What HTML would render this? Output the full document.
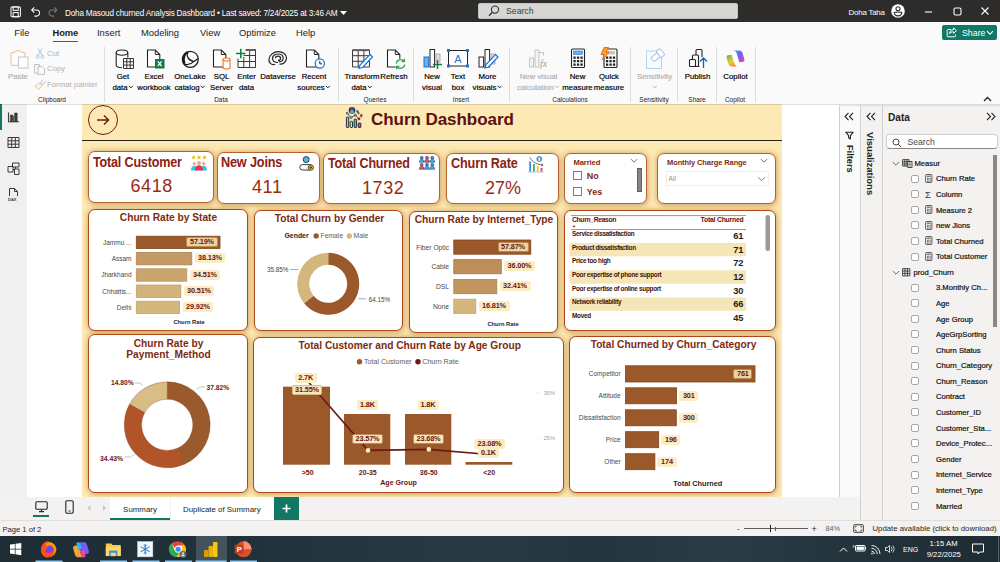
<!DOCTYPE html>
<html lang="en">
<head>
<meta charset="utf-8">
<title>Doha Masoud churned Analysis Dashboard</title>
<style>
*{box-sizing:border-box;margin:0;padding:0}
html,body{width:1000px;height:562px;overflow:hidden;background:#fff}
body{position:relative;font-family:"Liberation Sans",sans-serif;font-size:9px;color:#252423}
.abs{position:absolute}
.t{position:absolute;white-space:nowrap;line-height:1;margin-top:.8px}
.c{transform:translateX(-50%)}
.r{transform:translateX(-100%)}
#titlebar{left:0;top:0;width:1000px;height:22px;background:#2e2c2b}
#menurow{left:0;top:22px;width:1000px;height:21px;background:#fafafa}
#ribbon{left:0;top:43px;width:1000px;height:61px;background:#fafafa}
.menu{font-size:9.4px;color:#1b1a19;top:27px}
.rl{-webkit-text-stroke:.18px currentColor;font-size:9px;color:#000;text-align:center;line-height:10.6px;white-space:nowrap;position:absolute;transform:translateX(-50%);top:72px}
.rl.dis{color:#b3b0ad}
.gl{font-size:8px;color:#1b1a19;position:absolute;transform:translateX(-50%);top:96.5px;white-space:nowrap;line-height:1}
.sep{position:absolute;top:47px;width:1px;height:55px;background:#dcdcdc}
.ico{position:absolute;overflow:visible}
#leftnav{left:0;top:104px;width:27px;height:393px;background:#f0f0f0}
#canvas{left:82px;top:104px;width:700px;height:393px;background:#fde9b3}
.card{position:absolute;background:#fff;border:1.3px solid #b5622c;border-radius:7px;box-shadow:0 0 5px 1px rgba(205,155,90,.62), 1px 2px 4px rgba(175,125,60,.3)}
.ct{font-size:14.2px;font-weight:bold;color:#8b2211;letter-spacing:-.2px}
.cv{font-size:21px;color:#9b2a12;letter-spacing:.6px}
.pt{font-size:12px;font-weight:bold;color:#7d2a10;text-align:center}
.cat{font-size:8px;color:#4a4846}
.dl{position:absolute;font-size:8px;margin-top:-.3px;font-weight:bold;color:#6b1414;background:#fbecc4;border-radius:2px;height:10px;line-height:10px;text-align:center;white-space:nowrap}
.bar{position:absolute}
.tree{font-size:7.65px;color:#111;-webkit-text-stroke:.2px #111}
.tr{left:572px;font-size:6.4px;font-weight:bold;color:#3a1208;letter-spacing:-.3px}
.tn{left:743.5px;font-size:9.3px;font-weight:bold;color:#2a1a14}
.pn{border-width:1.6px;border-color:#ae4817;border-radius:7px}
.cb{position:absolute;width:8px;height:8px;border:1px solid #a9a7a5;border-radius:2px;background:#fff}
</style>
</head>
<body>
<!-- ================= TITLE BAR ================= -->
<div id="titlebar" class="abs"></div>
<svg class="ico" style="left:10px;top:5.500px" width="56.400" height="12.200" viewBox="0 0 60 13">
 <g fill="none" stroke="#fff" stroke-width="1.1">
  <rect x="1" y="1" width="10" height="10.5" rx="1"/><rect x="3.3" y="1" width="5.4" height="3.6"/><rect x="3.3" y="7" width="5.4" height="4.5"/>
  <path d="M23 4.2h5.2a3.3 3.3 0 0 1 0 6.6h-2.2M25.8 1.4 23 4.2l2.8 2.8"/>
 </g>
 <g fill="none" stroke="#777" stroke-width="1.1"><path d="M50 4.2h-5.2a3.3 3.3 0 0 0 0 6.6h2.2M47.2 1.4 50 4.2l-2.8 2.8"/></g>
</svg>
<div class="t" style="left:65px;top:9.2px;font-size:8.2px;color:#fff;letter-spacing:-.2px">Doha Masoud churned Analysis Dashboard • Last saved: 7/24/2025 at 3:46 AM</div>
<svg class="ico" style="left:339.500px;top:10.500px" width="7" height="5"><path d="M0 0h7L3.5 4z" fill="#fff"/></svg>
<div class="abs" style="left:478px;top:3px;width:260px;height:16px;background:#d6d6d4;border-radius:2px;border:1px solid #c4c4c2"></div>
<svg class="ico" style="left:488px;top:5px" width="12" height="12" viewBox="0 0 12 12"><circle cx="7" cy="4.6" r="3.6" fill="none" stroke="#333" stroke-width="1.1"/><path d="M4.4 7.3 1 10.8" stroke="#333" stroke-width="1.3"/></svg>
<div class="t" style="left:506px;top:6.300px;font-size:8.700px;color:#2c3e3a">Search</div>
<div class="t" style="left:848.500px;top:8px;font-size:7.900px;color:#fff;letter-spacing:-.2px">Doha Taha</div>
<svg class="ico" style="left:890.500px;top:4px" width="14" height="14" viewBox="0 0 14 14"><circle cx="7" cy="7" r="6.800" fill="#fff"/><circle cx="7" cy="4.800" r="2" fill="#fff" stroke="#2e2c2b" stroke-width="1.100"/><path d="M3.200 8.300h7.600c0 2.400-1.700 3.600-3.800 3.600s-3.800-1.200-3.800-3.600z" fill="#fff" stroke="#2e2c2b" stroke-width="1.100"/></svg>
<svg class="ico" style="left:922px;top:5px" width="72" height="13" viewBox="0 0 72 13"><g stroke="#fff" stroke-width="1.1" fill="none"><path d="M3 7h7"/><rect x="32" y="3" width="7" height="7" rx="1.4"/><path d="M59.500 2.500l7 7M66.500 2.500l-7 7"/></g></svg>
<!-- ================= MENU ROW ================= -->
<div id="menurow" class="abs"></div>
<div class="t menu" style="left:14.300px">File</div>
<div class="t menu" style="left:52.500px;font-weight:bold;letter-spacing:-.1px">Home</div>
<div class="abs" style="left:52.700px;top:40.500px;width:25.200px;height:1.700px;background:#117865"></div>
<div class="t menu" style="left:97px">Insert</div>
<div class="t menu" style="left:141px;">Modeling</div>
<div class="t menu" style="left:200px;">View</div>
<div class="t menu" style="left:239px;">Optimize</div>
<div class="t menu" style="left:296px;">Help</div>
<div class="abs" style="left:942px;top:25px;width:55px;height:15px;background:#117865;border-radius:2px"></div>
<svg class="ico" style="left:946px;top:27px" width="12" height="11" viewBox="0 0 12 11"><g fill="none" stroke="#fff" stroke-width="1"><path d="M5 2.500H2.200a1 1 0 0 0-1 1v5.300a1 1 0 0 0 1 1h6.300a1 1 0 0 0 1-1V7.500"/><path d="M7.500 1l3 2.700-3 2.700V4.800c-2 0-3.200.7-4 2 .2-2.400 1.600-4 4-4.200z"/></g></svg>
<div class="t" style="left:962px;top:28px;font-size:8.8px;color:#fff">Share</div>
<svg class="ico" style="left:986px;top:30px" width="8" height="6"><path d="M1 1.200l3 3 3-3" fill="none" stroke="#fff" stroke-width="1.1"/></svg>
<!-- ================= RIBBON ================= -->
<div id="ribbon" class="abs"></div>
<!-- clipboard group -->
<svg class="ico" style="left:10px;top:49px" width="20" height="20" viewBox="0 0 20 20"><g fill="#fdfdfd" stroke-width="1"><path d="M1 3.500h3.500l1.200-1.700h4.600l1.200 1.700H15v12.800H1z" stroke="#edc08c"/><rect x="8.500" y="8" width="9.500" height="11" stroke="#c8c6c4"/></g></svg>
<div class="rl dis" style="left:18px;top:72px;font-size:7.8px">Paste</div>
<svg class="ico" style="left:35px;top:48px" width="10" height="11" viewBox="0 0 10 11"><g fill="none" stroke="#a8c5e6" stroke-width="1"><path d="M3 .500l4.200 7M7 .500l-4.200 7"/><circle cx="2.500" cy="8.800" r="1.400"/><circle cx="7.500" cy="8.800" r="1.400"/></g></svg>
<div class="t" style="left:47px;top:49.200px;font-size:7.8px;color:#b3b0ad">Cut</div>
<svg class="ico" style="left:34px;top:63px" width="12" height="12" viewBox="0 0 12 12"><g fill="#fbfbfb" stroke="#c0bebc" stroke-width="1"><path d="M.6 1.500h4.800v8.600H.6z"/><path d="M4 3.500h4l2.600 2.600v5.300H4z"/></g></svg>
<div class="t" style="left:47px;top:64.500px;font-size:7.8px;color:#b3b0ad">Copy</div>
<svg class="ico" style="left:34px;top:79px" width="12" height="11" viewBox="0 0 12 11"><g fill="none" stroke-width="1"><path d="M9.500.6 6.500 4l2 2 3-3.400" stroke="#c0bebc"/><path d="M5.500 4 .8 7.200l3.800 3.300L8 6.300z" stroke="#f0c49a" fill="#fdf3e7"/></g></svg>
<div class="t" style="left:47px;top:80.200px;font-size:7.8px;color:#b3b0ad">Format painter</div>
<div class="gl" style="left:52px;font-size:6.5px">Clipboard</div>
<div class="sep" style="left:104px"></div>
<!-- data group -->
<svg class="ico" style="left:115px;top:49px" width="20" height="21" viewBox="0 0 20 21"><g fill="none" stroke="#252423" stroke-width="1.100"><ellipse cx="7" cy="3.600" rx="5.800" ry="2.600"/><path d="M1.200 3.600v12.500c0 1.500 2.600 2.600 5.800 2.600M12.800 3.600v5"/><path d="M8.500 9.500h10v10h-10zM8.500 12.800h10M8.500 16.100h10M11.800 9.500v10M15.200 9.500v10" stroke-width=".9"/></g></svg>
<div class="rl" style="left:123px;font-size:7.8px">Get<br>data<svg width="5" height="4" viewBox="0 0 5 4" style="display:inline-block;vertical-align:1px;margin-left:1px"><path d="M.5.800l2 2 2-2" fill="none" stroke="currentColor" stroke-width=".9"/></svg></div>
<svg class="ico" style="left:146px;top:49px" width="20" height="21" viewBox="0 0 20 21"><path d="M1.500 1h7.800l4.500 4.500V18H1.500z" fill="#fff" stroke="#252423" stroke-width="1.100"/><path d="M9.300 1v4.500h4.500" fill="none" stroke="#252423" stroke-width="1"/><rect x="9" y="10" width="9.500" height="9.500" fill="#107c41"/><path d="M11.800 12.400l3.800 4.800M15.600 12.400l-3.800 4.800" stroke="#fff" stroke-width="1.300"/></svg>
<div class="rl" style="left:154px;font-size:7.8px">Excel<br>workbook</div>
<svg class="ico" style="left:180px;top:48.500px" width="20" height="21" viewBox="0 0 20 21"><g fill="none" stroke="#1b1a19" stroke-width="1.200" stroke-linecap="round"><circle cx="10.300" cy="10.300" r="8"/><path d="M8 2.800c-1.800 4-.3 8.300 5.800 9.800l3.600-2.600M4.200 15c3 1.300 6.400.4 9.600-2.400"/><path d="M6.800 3.600C3.600 5.800 2.900 10.800 4.300 14" stroke-width="2.300"/></g></svg>
<div class="rl" style="left:190px;font-size:7.8px">OneLake<br>catalog<svg width="5" height="4" viewBox="0 0 5 4" style="display:inline-block;vertical-align:1px;margin-left:1px"><path d="M.5.800l2 2 2-2" fill="none" stroke="currentColor" stroke-width=".9"/></svg></div>
<svg class="ico" style="left:212px;top:49px" width="20" height="21" viewBox="0 0 20 21"><path d="M1.500 1h7.800l4.500 4.500V18H1.500z" fill="#fff" stroke="#252423" stroke-width="1.100"/><path d="M9.300 1v4.500h4.500" fill="none" stroke="#252423" stroke-width="1"/><g fill="#fff" stroke="#e07a2c" stroke-width="1.100"><path d="M11 10.500v8c0 .9 1.500 1.500 3.500 1.500s3.500-.6 3.500-1.500v-8"/><ellipse cx="14.500" cy="10.500" rx="3.500" ry="1.500"/></g></svg>
<div class="rl" style="left:221.500px;font-size:7.8px">SQL<br>Server</div>
<svg class="ico" style="left:235px;top:48px" width="22" height="22" viewBox="0 0 22 22"><g fill="none" stroke="#3b3a39" stroke-width="1"><path d="M3 1.500h17.500v18H3zM3 7.500h17.500M3 13.500h17.500M8.800 1.500v18M14.600 1.500v18"/></g><rect x="9" y="1" width="11.500" height="2" fill="#605e5c"/><rect x="0" y="0" width="10.500" height="10.500" fill="#fafafa"/><path d="M10.500 7.500h-2M8.800 10.500v-1.500" stroke="#3b3a39" stroke-width="1"/><path d="M5.800.800v9.400M1.100 5.500h9.400" stroke="#107c41" stroke-width="1.500"/></svg>
<div class="rl" style="left:246.500px;font-size:7.8px">Enter<br>data</div>
<svg class="ico" style="left:267px;top:49px" width="22" height="20" viewBox="0 0 22 20"><g fill="none" stroke="#252423" stroke-width="1.200"><path d="M11 13.500c-3.500 0-5.500-1.800-5.500-4.200S8 5 11 5s5.200 1.600 5.200 4-2 3.800-4.500 3.800"/><path d="M8.200 15.200C4 16.500 1.500 13.500 2 10S6 3 10.500 2.600c5-.4 9 2.500 9 6.500s-3.500 6.400-7 6"/><path d="M8.300 9.300c0-1.300 1.200-2.200 2.700-2.200s2.600.9 2.600 2.100-1.100 2.200-2.600 2.200"/></g></svg>
<div class="rl" style="left:278px;font-size:7.8px">Dataverse</div>
<svg class="ico" style="left:305px;top:49px" width="21" height="21" viewBox="0 0 21 21"><path d="M1.500 1h7.800l4.500 4.500V18H1.500z" fill="#fff" stroke="#252423" stroke-width="1.100"/><path d="M9.300 1v4.500h4.500" fill="none" stroke="#252423" stroke-width="1"/><circle cx="14.800" cy="14.500" r="4.600" fill="#fff" stroke="#1a73d9" stroke-width="1.200"/><path d="M14.800 11.800v3h2.200" fill="none" stroke="#252423" stroke-width="1"/></svg>
<div class="rl" style="left:314px;font-size:7.8px">Recent<br>sources<svg width="5" height="4" viewBox="0 0 5 4" style="display:inline-block;vertical-align:1px;margin-left:1px"><path d="M.5.800l2 2 2-2" fill="none" stroke="currentColor" stroke-width=".9"/></svg></div>
<div class="gl" style="left:221px;font-size:6.5px">Data</div>
<div class="sep" style="left:338px"></div>
<!-- queries group -->
<svg class="ico" style="left:351px;top:48px" width="23" height="22" viewBox="0 0 23 22"><g fill="none" stroke="#3b3a39" stroke-width="1"><path d="M1.500 2h17v17h-17zM1.500 7.700h17M1.500 13.300h17M7.200 2v17M12.900 2v17"/></g><rect x="1.500" y="1.300" width="17" height="1.800" fill="#605e5c"/><path d="M19 6.500l2.500 2.500-10 10.500-3.500 1 1-3.500z" fill="#fff" stroke="#1a73d9" stroke-width="1.200"/></svg>
<div class="rl" style="left:362px;font-size:7.8px">Transform<br>data<svg width="5" height="4" viewBox="0 0 5 4" style="display:inline-block;vertical-align:1px;margin-left:1px"><path d="M.5.800l2 2 2-2" fill="none" stroke="currentColor" stroke-width=".9"/></svg></div>
<svg class="ico" style="left:386px;top:49px" width="21" height="21" viewBox="0 0 21 21"><path d="M1.500 1h7.800l4.500 4.500V18H1.500z" fill="#fff" stroke="#252423" stroke-width="1.100"/><path d="M9.300 1v4.500h4.500" fill="none" stroke="#252423" stroke-width="1"/><circle cx="14.500" cy="15" r="5.500" fill="#fbfbfb"/><g fill="none" stroke="#2ea44f" stroke-width="1.300"><path d="M10.300 14.500a4.300 4.300 0 0 1 7.600-2.300M18.700 15.500a4.300 4.300 0 0 1-7.600 2.300"/><path d="M18.300 9.800v2.700h-2.700M10.700 20.200v-2.700h2.700"/></g></svg>
<div class="rl" style="left:394px;font-size:7.8px">Refresh</div>
<div class="gl" style="left:375px;font-size:6.5px">Queries</div>
<div class="sep" style="left:413px"></div>
<!-- insert group -->
<svg class="ico" style="left:422px;top:48px" width="22" height="22" viewBox="0 0 22 22"><rect x="2" y="9" width="4.600" height="10" fill="#71afe5" stroke="#1a73d9" stroke-width="1"/><rect x="8" y="1.500" width="4.600" height="17.500" fill="#fbfbfb" stroke="#252423" stroke-width="1"/><rect x="14" y="6" width="4" height="8" fill="#e1dfdd" stroke="#a19f9d" stroke-width=".8"/><path d="M15.500 12v9M11 16.500h9" stroke="#107c41" stroke-width="1.400"/></svg>
<div class="rl" style="left:432px;font-size:7.8px">New<br>visual</div>
<svg class="ico" style="left:447px;top:49px" width="22" height="19" viewBox="0 0 22 19"><rect x="1.500" y="1.500" width="19" height="15.500" fill="#fff" stroke="#252423" stroke-width="1"/><g fill="#1a73d9"><rect x="0" y="0" width="3" height="3"/><rect x="19" y="0" width="3" height="3"/><rect x="0" y="15.500" width="3" height="3"/><rect x="19" y="15.500" width="3" height="3"/></g><text x="11" y="13.500" font-size="11" text-anchor="middle" fill="#1a73d9" font-family="Liberation Sans, sans-serif">A</text></svg>
<div class="rl" style="left:458px;font-size:7.8px">Text<br>box</div>
<svg class="ico" style="left:477px;top:48px" width="23" height="22" viewBox="0 0 23 22"><g fill="#fbfbfb" stroke="#252423" stroke-width="1"><rect x="2" y="9" width="4.600" height="10"/><rect x="8" y="1.500" width="4.600" height="17.500"/></g><rect x="14" y="6" width="4" height="10" fill="#e1dfdd" stroke="#a19f9d" stroke-width=".8"/><path d="M18.500 6.500l2.500 2.500-9.500 10-3.500 1 1-3.500z" fill="#fff" stroke="#1a73d9" stroke-width="1.200"/></svg>
<div class="rl" style="left:487.500px;font-size:7.8px">More<br>visuals<svg width="5" height="4" viewBox="0 0 5 4" style="display:inline-block;vertical-align:1px;margin-left:1px"><path d="M.5.800l2 2 2-2" fill="none" stroke="currentColor" stroke-width=".9"/></svg></div>
<div class="gl" style="left:461px;font-size:6.5px">Insert</div>
<div class="sep" style="left:509px"></div>
<!-- calculations -->
<svg class="ico" style="left:528px;top:48px" width="22" height="22" viewBox="0 0 22 22"><g fill="#f3f2f1" stroke="#c8c6c4" stroke-width="1"><rect x="1.500" y="10" width="4" height="9"/><rect x="7" y="2" width="4" height="17"/></g><path d="M11 4.500h4.500v3" fill="none" stroke="#a8c5e6" stroke-width="1"/><text x="12" y="18.500" font-size="10" font-style="italic" fill="#a19f9d" font-family="Liberation Serif, serif">fx</text></svg>
<div class="rl dis" style="left:538.500px;font-size:7.8px">New visual<br>calculation<svg width="5" height="4" viewBox="0 0 5 4" style="display:inline-block;vertical-align:1px;margin-left:1px"><path d="M.5.800l2 2 2-2" fill="none" stroke="currentColor" stroke-width=".9"/></svg></div>
<svg class="ico" style="left:570px;top:48px" width="16" height="21" viewBox="0 0 16 21"><rect x="1.500" y="1" width="13" height="18.500" rx="1" fill="#fff" stroke="#252423" stroke-width="1.100"/><rect x="3.500" y="3" width="9" height="3.500" fill="#71afe5" stroke="#1a73d9" stroke-width=".6"/><g fill="#252423"><rect x="3.400" y="8.500" width="2.300" height="2.300"/><rect x="6.900" y="8.500" width="2.300" height="2.300"/><rect x="10.400" y="8.500" width="2.300" height="2.300"/><rect x="3.400" y="12" width="2.300" height="2.300"/><rect x="6.900" y="12" width="2.300" height="2.300"/><rect x="10.400" y="12" width="2.300" height="2.300"/><rect x="3.400" y="15.500" width="2.300" height="2.300"/><rect x="6.900" y="15.500" width="2.300" height="2.300"/><rect x="10.400" y="15.500" width="2.300" height="2.300"/></g></svg>
<div class="rl" style="left:577.500px;font-size:7.8px">New<br>measure</div>
<svg class="ico" style="left:598px;top:47px" width="21" height="22" viewBox="0 0 21 22"><rect x="6" y="2" width="13" height="18.500" rx="1" fill="#fff" stroke="#252423" stroke-width="1.100"/><rect x="8" y="4" width="9" height="3.500" fill="#c8c6c4"/><g fill="#252423"><rect x="7.900" y="9.500" width="2.300" height="2.300"/><rect x="11.400" y="9.500" width="2.300" height="2.300"/><rect x="14.900" y="9.500" width="2.300" height="2.300"/><rect x="7.900" y="13" width="2.300" height="2.300"/><rect x="11.400" y="13" width="2.300" height="2.300"/><rect x="14.900" y="13" width="2.300" height="2.300"/><rect x="7.900" y="16.500" width="2.300" height="2.300"/><rect x="11.400" y="16.500" width="2.300" height="2.300"/><rect x="14.900" y="16.500" width="2.300" height="2.300"/></g><path d="M6 .5h4.500L8 5h3L4.500 13l1.500-5.500H3z" fill="#f6a623" stroke="#d9541e" stroke-width=".8"/></svg>
<div class="rl" style="left:609px;font-size:7.8px">Quick<br>measure</div>
<div class="gl" style="left:570px;font-size:6.5px">Calculations</div>
<div class="sep" style="left:630px"></div>
<!-- sensitivity -->
<svg class="ico" style="left:645px;top:48px" width="20" height="22" viewBox="0 0 20 22"><rect x="1.500" y="3" width="15" height="17.500" fill="#f7fbff" stroke="#b5d3ef" stroke-width="1"/><g transform="rotate(-40 12 8)"><rect x="6" y="5.500" width="12" height="5" rx="1" fill="#fff" stroke="#9cc3e8" stroke-width="1"/><rect x="14" y="4" width="5" height="8" rx="1" fill="#fff" stroke="#9cc3e8" stroke-width="1"/></g></svg>
<div class="rl dis" style="left:654.500px;font-size:7.8px">Sensitivity<br><svg width="5" height="4" viewBox="0 0 5 4" style="display:inline-block;vertical-align:1px;margin-left:1px"><path d="M.5.800l2 2 2-2" fill="none" stroke="currentColor" stroke-width=".9"/></svg></div>
<div class="gl" style="left:654px;font-size:6.5px">Sensitivity</div>
<div class="sep" style="left:677px"></div>
<!-- share -->
<svg class="ico" style="left:688px;top:48px" width="20" height="22" viewBox="0 0 20 22"><g fill="#fbfbfb" stroke="#252423" stroke-width="1.100"><rect x="8" y="1.500" width="6" height="17" rx="1"/><rect x="4.500" y="7" width="6" height="11.500" rx="1"/><rect x="1.500" y="11.500" width="6" height="7" rx="1"/></g><rect x="11.500" y="9" width="8" height="12" fill="#fbfbfb"/><path d="M15.500 20v-9.500M12 13.500l3.500-3.500 3.500 3.500" fill="none" stroke="#1a5fb4" stroke-width="1.300"/></svg>
<div class="rl" style="left:697.500px;font-size:7.8px">Publish</div>
<div class="gl" style="left:697px;font-size:6.5px">Share</div>
<div class="sep" style="left:716px"></div>
<!-- copilot -->
<svg class="ico" style="left:725px;top:48px" width="21" height="21" viewBox="0 0 21 21"><defs><linearGradient id="cp1" x1="0" y1="0" x2="1" y2="1"><stop offset="0" stop-color="#2db4f0"/><stop offset=".5" stop-color="#7a5af5"/><stop offset="1" stop-color="#e64a9a"/></linearGradient><linearGradient id="cp2" x1="0" y1="0" x2="1" y2="1"><stop offset="0" stop-color="#35c46a"/><stop offset=".5" stop-color="#f6c431"/><stop offset="1" stop-color="#f2662e"/></linearGradient></defs><path d="M8 2.500h6.500c1.800 0 2.600 1 3 2.500l1.800 6c.5 1.800-.4 3-2.200 3H14l-2-7.500C11.500 4.300 10.500 2.500 8 2.500z" fill="url(#cp1)"/><path d="M13 18.500H6.500c-1.800 0-2.600-1-3-2.500l-1.800-6C1.200 8.200 2.100 7 3.900 7H7l2 7.500c.5 2.200 1.500 4 4 4z" fill="url(#cp2)"/><path d="M7 7h5l2 7H9z" fill="#fff" opacity=".85"/></svg>
<div class="rl" style="left:735.500px;font-size:7.800px">Copilot</div>
<div class="gl" style="left:735px;font-size:6.5px">Copilot</div>
<div class="sep" style="left:755px"></div>
<svg class="ico" style="left:983px;top:96px" width="9" height="6"><path d="M1 5l3.500-3.500L8 5" fill="none" stroke="#252423" stroke-width="1.300"/></svg>
<!-- ================= LEFT NAV ================= -->
<div id="leftnav" class="abs"></div>
<div class="abs" style="left:0;top:104px;width:2px;height:26px;background:#117865"></div>
<svg class="ico" style="left:7px;top:110px" width="13" height="92" viewBox="0 0 13 92"><g fill="none" stroke="#3b3a39" stroke-width="1"><path d="M1.500 2.500v9.300h10.500" stroke-width="1.100"/><path d="M3.400 5h2.400v6.800H3.400zM7.600 3h2.600v8.800H7.600z" fill="#3b3a39" stroke-width=".6"/><path d="M6.500 6v5.800" stroke-width=".8"/><path d="M1 27.500h11v10H1zM1 30.800h11M1 34.200h11M4.700 27.500v10M8.300 27.500v10"/><path d="M5.500 53h6.500v4H5.500zM1 56.500h5v5.500H1zM7.500 59h4.500v5.500H7.500zM6 59.500h1.500M8.500 57v2" /><path d="M2.500 86v-7.500h5l3 3V86M7.500 78.500v3h3" /></g><text x="1" y="90.500" font-size="4" fill="#3b3a39" font-family="Liberation Sans, sans-serif" font-weight="bold">DAX</text></svg>
<!-- ================= CANVAS ================= -->
<div id="canvas" class="abs"></div>
<div class="abs" style="left:0;top:104px;width:1000px;height:1px;background:rgba(0,0,0,.13)"></div>
<div class="abs" style="left:82px;top:140.200px;width:700px;height:1.200px;background:#2a2118"></div>
<div class="abs" style="left:88px;top:105px;width:30px;height:30px;border:1.3px solid #6e1c10;border-radius:50%"></div>
<svg class="ico" style="left:96px;top:114px" width="14" height="12" viewBox="0 0 14 12"><path d="M1 6h11.500M8 1.500 12.500 6 8 10.500" fill="none" stroke="#6e1c10" stroke-width="1.400"/></svg>
<!-- title icon -->
<svg class="ico" style="left:345px;top:106px" width="18" height="22" viewBox="0 0 18 22"><g stroke="#1f1a2e" stroke-width=".9"><rect x="1.400" y="11" width="2.300" height="10.500" rx=".6" fill="#5fe0f2"/><rect x="5.200" y="15.400" width="2.300" height="6.100" rx=".6" fill="#f6e04c"/><rect x="9.100" y="13.200" width="2.500" height="8.300" rx=".6" fill="#2fd3b0"/><rect x="13.300" y="17" width="2.500" height="4.500" rx=".6" fill="#f04a6a"/></g><path d="M2.200 7.200 6 11.600l4.300-2.400 3.700 3.600" fill="none" stroke="#1f1a2e" stroke-width=".8"/><circle cx="7" cy="4.400" r="3.300" fill="#3b3350"/><path d="M4.800 6.300c.3-1.600 1.100-2.200 2.200-2.200s1.900.6 2.200 2.200c-.6.700-1.400 1-2.200 1s-1.600-.3-2.200-1z" fill="#4aa8f0"/><circle cx="7" cy="2.900" r="1.100" fill="#6b5a8a"/><circle cx="2.200" cy="7.200" r="1" fill="#5fe0f2" stroke="#1f1a2e" stroke-width=".6"/><circle cx="6" cy="11.600" r="1" fill="#f6e04c" stroke="#1f1a2e" stroke-width=".6"/><circle cx="10.300" cy="9.200" r="1" fill="#2fd3b0" stroke="#1f1a2e" stroke-width=".6"/><circle cx="14" cy="12.800" r="1.100" fill="#a01830" stroke="#1f1a2e" stroke-width=".5"/><path d="M12.600 4.200l1.800 3.200-1.200.7-1.800-3.200z" fill="#8a6a20" stroke="#1f1a2e" stroke-width=".5"/><path d="M16.500 8c.9 1.200 1 2 .4 2.600s-1.500.4-1.700-.4.400-1.500 1.300-2.200z" fill="#e8304a" stroke="#1f1a2e" stroke-width=".5"/></svg>
<div class="t" style="left:371px;top:110px;font-size:17px;font-weight:bold;color:#5c1010;letter-spacing:-.05px">Churn Dashboard</div>
<!-- KPI cards -->
<div class="card" style="left:87.500px;top:151px;width:126px;height:52px"></div>
<div class="card" style="left:216.500px;top:152.300px;width:103.300px;height:51.300px"></div>
<div class="card" style="left:323px;top:153px;width:116.800px;height:51px"></div>
<div class="card" style="left:446px;top:153px;width:112.800px;height:51px"></div>
<div class="t ct" style="left:92.500px;top:154px;transform-origin:0 0;transform:scaleX(.885)">Total Customer</div>
<div class="t ct" style="left:220.800px;top:154.500px;transform-origin:0 0;transform:scaleX(.895)">New Joins</div>
<div class="t ct" style="left:328px;top:154.800px;transform-origin:0 0;transform:scaleX(.885)">Total Churned</div>
<div class="t ct" style="left:450.500px;top:154.800px;transform-origin:0 0;transform:scaleX(.895)">Churn Rate</div>
<div class="t cv" style="left:130.500px;top:176.500px;font-size:18px">6418</div>
<div class="t cv" style="left:252px;top:177px;font-size:18px">411</div>
<div class="t cv" style="left:362px;top:178px;font-size:18px">1732</div>
<div class="t cv" style="left:485px;top:178px;font-size:18px;letter-spacing:0">27%</div>
<!-- card icons -->
<svg class="ico" style="left:191px;top:155px" width="16" height="16" viewBox="0 0 16 16"><g fill="#f5b921"><path d="M2.500 0l.7 1.500 1.600.2-1.200 1.100.3 1.600L2.500 3.600 1.100 4.400l.3-1.600L.2 1.700l1.600-.2z"/><path d="M8 0l.7 1.500 1.600.2-1.200 1.100.3 1.600L8 3.600 6.600 4.400l.3-1.600L5.700 1.700l1.600-.2z"/><path d="M13.500 0l.7 1.500 1.600.2-1.200 1.100.3 1.600-1.400-.8-1.400.8.300-1.600-1.200-1.100 1.600-.2z"/></g><circle cx="3.300" cy="8.600" r="1.700" fill="#f4a582"/><circle cx="12.700" cy="8.600" r="1.700" fill="#f4a582"/><path d="M0 15.500c0-3 1.300-4.700 3.300-4.700s3.300 1.700 3.300 4.700z" fill="#37c6d9"/><path d="M9.400 15.500c0-3 1.300-4.700 3.300-4.700S16 12.500 16 15.500z" fill="#37c6d9"/><circle cx="8" cy="8" r="2" fill="#f4a582"/><path d="M4 15.500c0-3.400 1.600-5.200 4-5.200s4 1.800 4 5.200z" fill="#e8315b"/></svg>
<svg class="ico" style="left:299px;top:156px" width="16" height="15" viewBox="0 0 16 15"><circle cx="7.200" cy="3.600" r="3" fill="#5ab4e6" stroke="#1f2a33" stroke-width=".9"/><rect x=".8" y="8.600" width="12.500" height="5.400" rx="2.700" fill="#fff" stroke="#1f2a33" stroke-width=".9"/><circle cx="11.800" cy="11.600" r="2.700" fill="#f5c518" stroke="#1f2a33" stroke-width=".8"/><path d="M11.800 10.300v2.600M10.500 11.600h2.600" stroke="#1f2a33" stroke-width=".8"/></svg>
<svg class="ico" style="left:418.500px;top:156px" width="16" height="14" viewBox="0 0 16 14"><g stroke="#14375e" stroke-width=".5"><circle cx="2.700" cy="1.800" r="1.500" fill="#3f8fe0"/><path d="M.3 6.300c0-2 1-3 2.400-3s2.400 1 2.400 3z" fill="#3fb0f0"/><circle cx="8" cy="1.800" r="1.500" fill="#e8506a"/><path d="M5.600 6.300c0-2 1-3 2.400-3s2.400 1 2.400 3z" fill="#e8506a"/><circle cx="13.300" cy="1.800" r="1.500" fill="#3f8fe0"/><path d="M10.900 6.300c0-2 1-3 2.400-3s2.400 1 2.400 3z" fill="#3fb0f0"/><circle cx="2.700" cy="8.800" r="1.500" fill="#e8506a"/><path d="M.3 13.300c0-2 1-3 2.400-3s2.400 1 2.400 3z" fill="#e8506a"/><circle cx="8" cy="8.800" r="1.500" fill="#3f8fe0"/><path d="M5.600 13.300c0-2 1-3 2.400-3s2.400 1 2.400 3z" fill="#3fb0f0"/><circle cx="13.300" cy="8.800" r="1.500" fill="#3f8fe0"/><path d="M10.900 13.300c0-2 1-3 2.400-3s2.400 1 2.400 3z" fill="#3fb0f0"/></g></svg>
<svg class="ico" style="left:528px;top:156px" width="17" height="17" viewBox="0 0 17 17"><rect x="1.200" y="5.500" width="1.800" height="10" fill="#3f8fe0"/><rect x="5" y="8" width="1.800" height="7.500" fill="#34b26a"/><rect x="8.800" y="10" width="1.800" height="5.500" fill="#f5c518"/><rect x="12.600" y="12" width="1.800" height="3.500" fill="#e83a4f"/><path d="M.3 16h15.400" stroke="#8aa6c4" stroke-width=".7"/><path d="M2 1.500c2.500 5 7 7.200 13 7.500M15 9l-1.700-1.300M15 9l-1.800 1" fill="none" stroke="#3b4a5a" stroke-width=".8"/><circle cx="11.300" cy="3" r="2.500" fill="#5ab4e6" stroke="#3b4a5a" stroke-width=".6"/><circle cx="11.300" cy="2.400" r=".9" fill="#fff"/><path d="M9.800 4.600c.3-.8.800-1.100 1.500-1.100s1.200.3 1.500 1.100" fill="#fff"/></svg>
<!-- slicers -->
<div class="card" style="left:564px;top:152.500px;width:82.500px;height:51px"></div>
<div class="card" style="left:657px;top:152.500px;width:119px;height:51px"></div>
<div class="t" style="left:573.500px;top:158.500px;font-size:7.600px;font-weight:bold;color:#7d2a10;letter-spacing:-.1px">Married</div>
<svg class="ico" style="left:630px;top:158px" width="8" height="6"><path d="M1 1.200l3 3 3-3" fill="none" stroke="#605e5c" stroke-width=".9"/></svg>
<div class="abs" style="left:573px;top:171.300px;width:9px;height:9.200px;border:1px solid #7f7d7b;background:#fff"></div>
<div class="abs" style="left:573px;top:186.800px;width:9px;height:9.200px;border:1px solid #7f7d7b;background:#fff"></div>
<div class="t" style="left:586.800px;top:171.300px;font-size:9px;font-weight:bold;color:#7d2a10">No</div>
<div class="t" style="left:586.800px;top:187.300px;font-size:9px;font-weight:bold;color:#7d2a10">Yes</div>
<div class="abs" style="left:637px;top:168px;width:4.500px;height:24px;background:#8a8886;border:.5px solid #605e5c"></div>
<div class="t" style="left:667px;top:158.500px;font-size:7.500px;font-weight:bold;color:#7d2a10;letter-spacing:-.1px">Monthly Charge Range</div>
<svg class="ico" style="left:759.500px;top:158px" width="8" height="6"><path d="M1 1.200l3 3 3-3" fill="none" stroke="#605e5c" stroke-width=".9"/></svg>
<div class="abs" style="left:665.500px;top:171px;width:103px;height:14.500px;border:1px solid #f1efed;background:#fff"></div>
<div class="t" style="left:668.500px;top:175.500px;font-size:6.800px;color:#b5886a">All</div>
<svg class="ico" style="left:756.500px;top:175.500px" width="9" height="6"><path d="M1 1.200l3.500 3.500L8 1.200" fill="none" stroke="#b5622c" stroke-width=".9"/></svg>
<!-- ================= CHART PANELS ================= -->
<div class="card pn" style="left:87.500px;top:209px;width:160.500px;height:122px"></div>
<div class="card pn" style="left:253.800px;top:210px;width:149px;height:121px"></div>
<div class="card pn" style="left:408.500px;top:210.500px;width:149.800px;height:122.500px"></div>
<div class="card pn" style="left:564.300px;top:210px;width:211.700px;height:121px"></div>
<div class="card pn" style="left:87.500px;top:333.800px;width:160.500px;height:159.200px"></div>
<div class="card pn" style="left:253px;top:336.800px;width:311px;height:156.200px"></div>
<div class="card pn" style="left:569.300px;top:335.700px;width:206.700px;height:157.300px"></div>
<!-- panel titles -->
<div class="t pt c" style="left:168.500px;top:212.3px;font-size:10.200px">Churn Rate by State</div>
<div class="t pt c" style="left:329.500px;top:213.3px;font-size:10.200px">Total Churn by Gender</div>
<div class="t pt c" style="left:484px;top:213.8px;font-size:10.200px">Churn Rate by Internet_Type</div>
<div class="t pt c" style="left:168.500px;top:336.8px;font-size:10.200px;line-height:11.800px;white-space:normal;width:130px">Churn Rate by Payment_Method</div>
<div class="t pt c" style="left:409.700px;top:340.3px;font-size:10.200px">Total Customer and Churn Rate by Age Group</div>
<div class="t pt c" style="left:673.500px;top:339.3px;font-size:10.200px">Total Churned by Churn_Category</div>
<!-- chart shapes -->
<svg class="ico" style="left:0;top:0" width="1000" height="562" viewBox="0 0 1000 562">
 <!-- state bars -->
 <g stroke-width=".8">
  <rect x="136.300" y="236.200" width="83.700" height="12.400" fill="#9b582a" stroke="#87451b"/>
  <rect x="136.300" y="252.500" width="55.500" height="12.400" fill="#c39a63" stroke="#b18650"/>
  <rect x="136.300" y="268.800" width="50.500" height="12.400" fill="#caa56d" stroke="#b8925a"/>
  <rect x="136.300" y="285" width="44.500" height="12.400" fill="#d2b379" stroke="#c0a066"/>
  <rect x="136.300" y="301.200" width="43.300" height="12.400" fill="#d4b77d" stroke="#c2a46a"/>
 </g>
 <!-- gender donut -->
 <path d="M328.20 252.80A31 31 0 1 1 304.13 303.33L313.45 295.77A19 19 0 1 0 328.20 264.80Z" fill="#9b582a"/>
 <path d="M304.13 303.33A31 31 0 0 1 328.20 252.80L328.20 264.80A19 19 0 0 0 313.45 295.77Z" fill="#d4b77d"/>
 <path d="M290 269.500h8.500M358.500 298.800h7.500" fill="none" stroke="#8a8886" stroke-width=".7"/>
 <circle cx="316.200" cy="235.900" r="2.700" fill="#9b582a"/><circle cx="349.300" cy="235.900" r="2.700" fill="#d4b77d"/>
 <!-- internet bars -->
 <g stroke-width=".8">
  <rect x="453.800" y="240" width="77" height="14.200" fill="#9b582a" stroke="#87451b"/>
  <rect x="453.800" y="259.600" width="47.500" height="14.200" fill="#bd8e58" stroke="#a97a45"/>
  <rect x="453.800" y="279.500" width="43" height="14.200" fill="#c2965f" stroke="#ae824b"/>
  <rect x="453.800" y="299.200" width="22" height="14.200" fill="#d4b77d" stroke="#c2a46a"/>
 </g>
 <!-- table -->
 <g fill="#f5e6b8"><rect x="569.500" y="243" width="176.500" height="13.300"/><rect x="569.500" y="270.300" width="176.500" height="13.400"/><rect x="569.500" y="297.500" width="176.500" height="13.400"/></g>
 <path d="M571 215.600h175M571 229.600h175" stroke="#8c5a3c" stroke-width=".7"/>
 <path d="M572.500 225.800h3l-1.500 1.600z" fill="#5c1010"/>
 <rect x="765.500" y="215" width="4.500" height="36" rx="2.200" fill="#9a9a9a"/>
</svg>
<!-- state chart labels -->
<div class="t cat r" style="left:131.500px;top:239px;font-size:6.500px">Jammu ...</div>
<div class="t cat r" style="left:131.500px;top:255.300px;font-size:6.500px">Assam</div>
<div class="t cat r" style="left:131.500px;top:271.600px;font-size:6.500px">Jharkhand</div>
<div class="t cat r" style="left:131.500px;top:287.800px;font-size:6.500px">Chhattis...</div>
<div class="t cat r" style="left:131.500px;top:304px;font-size:6.500px">Delhi</div>
<div class="dl" style="left:186px;top:237.500px;width:32px;font-size:7.3px;letter-spacing:-.15px;background:#e9d3a0;border:.7px solid #b58d55;line-height:8.600px">57.19%</div>
<div class="dl" style="left:195px;top:253.700px;width:30px;font-size:7.3px;letter-spacing:-.15px">38.13%</div>
<div class="dl" style="left:190px;top:270px;width:30px;font-size:7.3px;letter-spacing:-.15px">34.51%</div>
<div class="dl" style="left:184px;top:286.200px;width:30px;font-size:7.3px;letter-spacing:-.15px">30.51%</div>
<div class="dl" style="left:183px;top:302.400px;width:30px;font-size:7.3px;letter-spacing:-.15px">29.92%</div>
<div class="t c" style="left:189px;top:319px;font-size:5.800px;font-weight:bold;color:#252423">Churn Rate</div>
<!-- gender labels -->
<div class="t" style="left:284.500px;top:232.300px;font-size:6.900px;font-weight:bold;color:#252423">Gender</div>
<div class="t" style="left:320.500px;top:232.300px;font-size:6.800px;color:#605e5c">Female</div>
<div class="t" style="left:353.500px;top:232.300px;font-size:6.800px;color:#605e5c">Male</div>
<div class="t" style="left:267px;top:266.300px;font-size:6.300px;color:#444">35.85%</div>
<div class="t" style="left:368.800px;top:296.300px;font-size:6.300px;color:#444">64.15%</div>
<!-- internet labels -->
<div class="t cat r" style="left:449px;top:243.800px;font-size:6.700px">Fiber Optic</div>
<div class="t cat r" style="left:449px;top:263.400px;font-size:6.700px">Cable</div>
<div class="t cat r" style="left:449px;top:283.300px;font-size:6.700px">DSL</div>
<div class="t cat r" style="left:449px;top:303px;font-size:6.700px">None</div>
<div class="dl" style="left:497.500px;top:242.200px;width:31px;font-size:7.3px;letter-spacing:-.15px;background:#e9d3a0;border:.7px solid #b58d55;line-height:8.600px">57.87%</div>
<div class="dl" style="left:504px;top:261.700px;width:31px;font-size:7.3px;letter-spacing:-.15px">36.00%</div>
<div class="dl" style="left:499.500px;top:281.600px;width:31px;font-size:7.3px;letter-spacing:-.15px">32.41%</div>
<div class="dl" style="left:478.500px;top:301.300px;width:31px;font-size:7.3px;letter-spacing:-.15px">16.81%</div>
<div class="t c" style="left:503px;top:320.800px;font-size:5.800px;font-weight:bold;color:#252423">Churn Rate</div>
<!-- table text -->
<div class="t" style="left:572px;top:216.300px;font-size:6.800px;font-weight:bold;color:#5c1010;letter-spacing:-.35px">Churn_Reason</div>
<div class="t r" style="left:743.500px;top:216.300px;font-size:6.800px;font-weight:bold;color:#5c1010;letter-spacing:-.2px">Total Churned</div>
<div class="t tr" style="top:230.4px">Service dissatisfaction</div><div class="t tn r" style="top:231.4px">61</div>
<div class="t tr" style="top:244.0px">Product dissatisfaction</div><div class="t tn r" style="top:245.0px">71</div>
<div class="t tr" style="top:257.7px">Price too high</div><div class="t tn r" style="top:258.7px">72</div>
<div class="t tr" style="top:271.3px">Poor expertise of phone support</div><div class="t tn r" style="top:272.3px">12</div>
<div class="t tr" style="top:284.9px">Poor expertise of online support</div><div class="t tn r" style="top:285.9px">30</div>
<div class="t tr" style="top:298.5px">Network reliability</div><div class="t tn r" style="top:299.5px">66</div>
<div class="t tr" style="top:312.2px">Moved</div><div class="t tn r" style="top:313.2px">45</div>
<!-- ================= ROW 2 CHARTS ================= -->
<svg class="ico" style="left:0;top:0" width="1000" height="562" viewBox="0 0 1000 562">
 <!-- payment donut -->
 <path d="M167.20 381.80A43.0 43.0 0 0 1 184.41 464.21L177.45 448.26A25.6 25.6 0 0 0 167.20 399.20Z" fill="#9a5a2b" stroke="rgba(110,40,10,.45)" stroke-width=".6"/>
 <path d="M184.41 464.21A43.0 43.0 0 0 1 129.52 404.09L144.77 412.47A25.6 25.6 0 0 0 177.45 448.26Z" fill="#b1542a" stroke="rgba(110,40,10,.45)" stroke-width=".6"/>
 <path d="M129.52 404.09A43.0 43.0 0 0 1 167.20 381.80L167.20 399.20A25.6 25.6 0 0 0 144.77 412.47Z" fill="#d8be86" stroke="rgba(110,40,10,.45)" stroke-width=".6"/>
 <path d="M205 387h-5l-3.500 2.500M135 383h5l3 2.500M124.500 457h6l4-2.500" fill="none" stroke="#a19f9d" stroke-width=".6"/>
 <!-- combo bars -->
 <g fill="#9b582a">
  <rect x="283" y="386.700" width="47" height="78"/>
  <rect x="344" y="414" width="46.300" height="50.700"/>
  <rect x="405" y="414" width="46.300" height="50.700"/>
  <rect x="465.500" y="462" width="46.800" height="2.700"/>
 </g>
 <path d="M307.500 381 368 450.400 428.800 449.400 489 454.500" fill="none" stroke="#6b1a1a" stroke-width="1.600" stroke-linejoin="round"/>
 <circle cx="368" cy="450.400" r="2.300" fill="#fbecc4"/><circle cx="428.800" cy="449.400" r="2.300" fill="#fbecc4"/>
 <circle cx="359.500" cy="361.800" r="2.700" fill="#9b582a"/><circle cx="418" cy="361.800" r="2.700" fill="#6b1a1a"/>
 <path d="M536 392.700h4M536 437.900h4" stroke="#d8d6d4" stroke-width=".6" stroke-dasharray="1 1"/>
 <!-- category bars -->
 <g fill="#9b582a" stroke="#87451b" stroke-width=".8">
  <rect x="625.400" y="365.800" width="129.600" height="16.200"/>
  <rect x="625.400" y="387.800" width="51.200" height="16"/>
  <rect x="625.400" y="409.800" width="50.900" height="16"/>
  <rect x="625.400" y="431.700" width="33.300" height="16"/>
  <rect x="625.400" y="453.700" width="29.500" height="16"/>
 </g>
</svg>
<!-- payment labels -->
<div class="t" style="left:206.500px;top:384px;font-size:6.700px;font-weight:bold;color:#6b1414">37.82%</div>
<div class="t" style="left:111px;top:379.600px;font-size:6.700px;font-weight:bold;color:#6b1414">14.80%</div>
<div class="t" style="left:100px;top:454.800px;font-size:6.800px;font-weight:bold;color:#6b1414">34.43%</div>
<!-- combo labels -->
<div class="t" style="left:364px;top:358.300px;font-size:7.100px;color:#605e5c">Total Customer</div>
<div class="t" style="left:422.300px;top:358.300px;font-size:7.100px;color:#605e5c">Churn Rate</div>
<div class="dl" style="left:295px;top:373.500px;width:21.500px;font-size:7.3px;letter-spacing:-.15px">2.7K</div>
<div class="dl" style="left:292px;top:385px;width:30px;font-size:7.3px;letter-spacing:-.15px;background:#f7e6b9;border:.6px solid #d6bd85;line-height:8.800px">31.55%</div>
<div class="dl" style="left:357px;top:400px;width:21px;font-size:7.3px;letter-spacing:-.15px">1.8K</div>
<div class="dl" style="left:417.500px;top:400px;width:21px;font-size:7.3px;letter-spacing:-.15px">1.8K</div>
<div class="dl" style="left:352px;top:434.500px;width:31px;font-size:7.3px;letter-spacing:-.15px;background:#f7e6b9;border:.7px solid #b58d55;line-height:8.600px">23.57%</div>
<div class="dl" style="left:413px;top:434.500px;width:31px;font-size:7.3px;letter-spacing:-.15px;background:#f7e6b9;border:.7px solid #b58d55;line-height:8.600px">23.68%</div>
<div class="dl" style="left:474px;top:439px;width:31px;font-size:7.3px;letter-spacing:-.15px">23.08%</div>
<div class="dl" style="left:478px;top:448.700px;width:21px;font-size:7.3px;letter-spacing:-.15px">0.1K</div>
<div class="t c" style="left:307.700px;top:468.500px;font-size:7px;font-weight:bold;color:#6b1414">&gt;50</div>
<div class="t c" style="left:367.800px;top:468.500px;font-size:7px;font-weight:bold;color:#6b1414">20-35</div>
<div class="t c" style="left:428.800px;top:468.500px;font-size:7px;font-weight:bold;color:#6b1414">36-50</div>
<div class="t c" style="left:489.200px;top:468.500px;font-size:7px;font-weight:bold;color:#6b1414">&lt;20</div>
<div class="t c" style="left:398.500px;top:479.200px;font-size:7.100px;font-weight:bold;color:#6b1414">Age Group</div>
<div class="t" style="left:543.700px;top:390px;font-size:5.600px;color:#a19f9d">30%</div>
<div class="t" style="left:543.700px;top:435.200px;font-size:5.600px;color:#a19f9d">25%</div>
<!-- category labels -->
<div class="t cat r" style="left:620.600px;top:370.600px;font-size:6.500px">Competitor</div>
<div class="t cat r" style="left:620.600px;top:392.500px;font-size:6.500px">Attitude</div>
<div class="t cat r" style="left:620.600px;top:414.500px;font-size:6.500px">Dissatisfaction</div>
<div class="t cat r" style="left:620.600px;top:436.400px;font-size:6.500px">Price</div>
<div class="t cat r" style="left:620.600px;top:458.400px;font-size:6.500px">Other</div>
<div class="dl" style="left:733.300px;top:369px;width:19.200px;font-size:7.3px;letter-spacing:-.15px;background:#e9d3a0;border:.7px solid #b58d55;line-height:8.600px">761</div>
<div class="dl" style="left:679.200px;top:391px;width:19.200px;font-size:7.3px;letter-spacing:-.15px">301</div>
<div class="dl" style="left:679.200px;top:413px;width:19.200px;font-size:7.3px;letter-spacing:-.15px">300</div>
<div class="dl" style="left:661.300px;top:435px;width:19.200px;font-size:7.3px;letter-spacing:-.15px">196</div>
<div class="dl" style="left:657.400px;top:457px;width:19.200px;font-size:7.3px;letter-spacing:-.15px">174</div>
<div class="t c" style="left:697.800px;top:479px;font-size:7.300px;font-weight:bold;color:#252423">Total Churned</div>
<!-- ================= RIGHT PANES ================= -->
<div class="abs" style="left:838.500px;top:104px;width:22px;height:393px;background:#fafafa;border-left:1px solid #d2d0ce"></div>
<div class="abs" style="left:860px;top:104px;width:22px;height:416px;background:#f3f2f1;border-left:1px solid #d2d0ce"></div>
<div class="abs" style="left:882px;top:104px;width:118px;height:416px;background:#f3f2f1;border-left:1px solid #d2d0ce"></div>
<div class="abs" style="left:838.500px;top:104px;width:161.500px;height:3px;background:linear-gradient(#d9d7d5,rgba(217,215,213,0))"></div>
<svg class="ico" style="left:844px;top:111.800px" width="10" height="9" viewBox="0 0 10 9"><path d="M4.500.800 1 4.500l3.500 3.700M9 .800 5.500 4.500 9 8.200" fill="none" stroke="#252423" stroke-width="1.100"/></svg>
<svg class="ico" style="left:866px;top:111.800px" width="10" height="9" viewBox="0 0 10 9"><path d="M4.500.800 1 4.500l3.500 3.700M9 .800 5.500 4.500 9 8.200" fill="none" stroke="#252423" stroke-width="1.100"/></svg>
<svg class="ico" style="left:986px;top:111.800px" width="10" height="9" viewBox="0 0 10 9"><path d="M1 .800l3.500 3.700L1 8.200M5.500.800 9 4.500 5.500 8.200" fill="none" stroke="#252423" stroke-width="1.100"/></svg>
<svg class="ico" style="left:844.500px;top:131px" width="9" height="9" viewBox="0 0 9 9"><path d="M.8 1.200h7.400L5.400 4.600v3.400L3.600 6.800V4.600z" fill="none" stroke="#252423" stroke-width="1.100" stroke-linejoin="round"/></svg>
<div class="t" style="left:849px;top:144px;font-size:9.200px;font-weight:bold;color:#252423;writing-mode:vertical-rl;transform:translateX(-50%)">Filters</div>
<div class="t" style="left:870px;top:131px;font-size:9.500px;font-weight:bold;color:#252423;writing-mode:vertical-rl;transform:translateX(-50%)">Visualizations</div>
<div class="t" style="left:888px;top:112px;font-size:10.100px;font-weight:bold;color:#252423">Data</div>
<div class="abs" style="left:885.500px;top:133.800px;width:112px;height:15.700px;background:#fff;border:1px solid #d2d0ce;border-bottom-color:#8a8886;border-radius:4px"></div>
<svg class="ico" style="left:892px;top:137.500px" width="10" height="10" viewBox="0 0 10 10"><circle cx="4" cy="4" r="3" fill="none" stroke="#3b3a39" stroke-width=".9"/><path d="M6.200 6.200 9.200 9.200" stroke="#3b3a39" stroke-width="1"/></svg>
<div class="t" style="left:907.500px;top:137.500px;font-size:8.600px;color:#484644">Search</div>
<div class="abs" style="left:992.500px;top:155px;width:4.500px;height:172px;background:#8a8886"></div>
<svg class="ico" style="left:891.500px;top:160.5px" width="8" height="6"><path d="M.8 1l3.200 3.200L7.200 1" fill="none" stroke="#605e5c" stroke-width=".9"/></svg>
<svg class="ico" style="left:902px;top:158.5px" width="11" height="9" viewBox="0 0 11 9"><path d="M.6.600h6.500v6.500H.6zM.6 2.800h6.500M.6 5h6.500M2.800.600v6.500M5 .600v6.500" fill="none" stroke="#252423" stroke-width=".8"/><rect x="5.800" y="2.500" width="4.200" height="6" fill="#f3f2f1" stroke="#252423" stroke-width=".8"/><path d="M6.800 4h2.200M6.800 5.500h2.200M6.800 7h2.200" stroke="#252423" stroke-width=".6"/></svg>
<div class="t tree" style="left:914.500px;top:159.0px">Measur</div>
<div class="cb" style="left:911px;top:174.6px"></div>
<svg class="ico" style="left:925px;top:174.1px" width="8" height="9" viewBox="0 0 8 9"><rect x=".6" y=".5" width="6.300" height="8" rx=".8" fill="none" stroke="#3b3a39" stroke-width=".8"/><path d="M1.800 2.200h3.900M2 4.300h.9M3.400 4.300h.9M4.800 4.300h.9M2 5.800h.9M3.400 5.800h.9M4.800 5.800h.9M2 7.200h.9M3.400 7.200h.9M4.800 7.200h.9" stroke="#3b3a39" stroke-width=".9"/></svg>
<div class="t tree" style="left:936px;top:174.6px">Churn Rate</div>
<div class="cb" style="left:911px;top:190.2px"></div>
<div class="t" style="left:925px;top:189.2px;font-size:9.500px;color:#3b3a39">Σ</div>
<div class="t tree" style="left:936px;top:190.2px">Column</div>
<div class="cb" style="left:911px;top:205.8px"></div>
<svg class="ico" style="left:925px;top:205.3px" width="8" height="9" viewBox="0 0 8 9"><rect x=".6" y=".5" width="6.300" height="8" rx=".8" fill="none" stroke="#3b3a39" stroke-width=".8"/><path d="M1.800 2.200h3.900M2 4.300h.9M3.400 4.300h.9M4.800 4.300h.9M2 5.800h.9M3.400 5.800h.9M4.800 5.800h.9M2 7.200h.9M3.400 7.200h.9M4.800 7.200h.9" stroke="#3b3a39" stroke-width=".9"/></svg>
<div class="t tree" style="left:936px;top:205.8px">Measure 2</div>
<div class="cb" style="left:911px;top:221.3px"></div>
<svg class="ico" style="left:925px;top:220.8px" width="8" height="9" viewBox="0 0 8 9"><rect x=".6" y=".5" width="6.300" height="8" rx=".8" fill="none" stroke="#3b3a39" stroke-width=".8"/><path d="M1.800 2.200h3.900M2 4.300h.9M3.400 4.300h.9M4.800 4.300h.9M2 5.800h.9M3.400 5.800h.9M4.800 5.800h.9M2 7.200h.9M3.400 7.200h.9M4.800 7.200h.9" stroke="#3b3a39" stroke-width=".9"/></svg>
<div class="t tree" style="left:936px;top:221.3px">new Jions</div>
<div class="cb" style="left:911px;top:236.9px"></div>
<svg class="ico" style="left:925px;top:236.4px" width="8" height="9" viewBox="0 0 8 9"><rect x=".6" y=".5" width="6.300" height="8" rx=".8" fill="none" stroke="#3b3a39" stroke-width=".8"/><path d="M1.800 2.200h3.900M2 4.300h.9M3.400 4.300h.9M4.800 4.300h.9M2 5.800h.9M3.400 5.800h.9M4.800 5.800h.9M2 7.200h.9M3.400 7.200h.9M4.800 7.200h.9" stroke="#3b3a39" stroke-width=".9"/></svg>
<div class="t tree" style="left:936px;top:236.9px">Total Churned</div>
<div class="cb" style="left:911px;top:252.5px"></div>
<svg class="ico" style="left:925px;top:252.0px" width="8" height="9" viewBox="0 0 8 9"><rect x=".6" y=".5" width="6.300" height="8" rx=".8" fill="none" stroke="#3b3a39" stroke-width=".8"/><path d="M1.800 2.200h3.900M2 4.300h.9M3.400 4.300h.9M4.800 4.300h.9M2 5.800h.9M3.400 5.800h.9M4.800 5.800h.9M2 7.200h.9M3.400 7.200h.9M4.800 7.200h.9" stroke="#3b3a39" stroke-width=".9"/></svg>
<div class="t tree" style="left:936px;top:252.5px">Total Customer</div>
<svg class="ico" style="left:891.500px;top:269.5px" width="8" height="6"><path d="M.8 1l3.200 3.200L7.200 1" fill="none" stroke="#605e5c" stroke-width=".9"/></svg>
<svg class="ico" style="left:902px;top:267.5px" width="10" height="9" viewBox="0 0 10 9"><path d="M.6.600h7.300v7.300H.6zM.6 3h7.300M.6 5.400h7.300M3 .600v7.300M5.500.600v7.300" fill="none" stroke="#252423" stroke-width=".8"/></svg>
<div class="t tree" style="left:913.500px;top:268.0px">prod_Churn</div>
<div class="cb" style="left:911px;top:283.6px"></div>
<div class="t tree" style="left:936px;top:283.6px">3.Monthly Ch...</div>
<div class="cb" style="left:911px;top:299.2px"></div>
<div class="t tree" style="left:936px;top:299.2px">Age</div>
<div class="cb" style="left:911px;top:314.8px"></div>
<div class="t tree" style="left:936px;top:314.8px">Age Group</div>
<div class="cb" style="left:911px;top:330.3px"></div>
<div class="t tree" style="left:936px;top:330.3px">AgeGrpSorting</div>
<div class="cb" style="left:911px;top:346.0px"></div>
<div class="t tree" style="left:936px;top:346.0px">Churn Status</div>
<div class="cb" style="left:911px;top:361.5px"></div>
<div class="t tree" style="left:936px;top:361.5px">Churn_Category</div>
<div class="cb" style="left:911px;top:377.1px"></div>
<div class="t tree" style="left:936px;top:377.1px">Churn_Reason</div>
<div class="cb" style="left:911px;top:392.7px"></div>
<div class="t tree" style="left:936px;top:392.7px">Contract</div>
<div class="cb" style="left:911px;top:408.3px"></div>
<div class="t tree" style="left:936px;top:408.3px">Customer_ID</div>
<div class="cb" style="left:911px;top:423.8px"></div>
<div class="t tree" style="left:936px;top:423.8px">Customer_Sta...</div>
<div class="cb" style="left:911px;top:439.4px"></div>
<div class="t tree" style="left:936px;top:439.4px">Device_Protec...</div>
<div class="cb" style="left:911px;top:455.0px"></div>
<div class="t tree" style="left:936px;top:455.0px">Gender</div>
<div class="cb" style="left:911px;top:470.6px"></div>
<div class="t tree" style="left:936px;top:470.6px">Internet_Service</div>
<div class="cb" style="left:911px;top:486.1px"></div>
<div class="t tree" style="left:936px;top:486.1px">Internet_Type</div>
<div class="cb" style="left:911px;top:501.8px"></div>
<div class="t tree" style="left:936px;top:501.8px">Married</div>
<!-- ================= TAB BAR ================= -->
<div class="abs" style="left:0;top:497px;width:860px;height:23px;background:#f3f2f1"></div>
<svg class="ico" style="left:35px;top:501px" width="13" height="12" viewBox="0 0 13 12"><rect x=".8" y=".8" width="11.400" height="7.500" rx="1" fill="none" stroke="#252423" stroke-width="1.100"/><path d="M6.500 8.300v2M4 10.600h5" stroke="#252423" stroke-width="1.100"/></svg>
<div class="abs" style="left:33px;top:515px;width:16px;height:1.500px;background:#117865"></div>
<svg class="ico" style="left:65px;top:500px" width="9" height="14" viewBox="0 0 9 14"><rect x=".8" y=".8" width="7.400" height="12.400" rx="1.300" fill="none" stroke="#252423" stroke-width="1.100"/><path d="M3.500 11h2" stroke="#252423" stroke-width="1"/></svg>
<svg class="ico" style="left:87px;top:505px" width="20" height="6" viewBox="0 0 20 6"><path d="M3.500 0v6L.5 3zM16 0v6l3-3z" fill="#c8c6c4"/></svg>
<div class="abs" style="left:110px;top:497px;width:60px;height:23px;background:#fff"></div>
<div class="abs" style="left:110px;top:518px;width:60px;height:2px;background:#117865"></div>
<div class="abs" style="left:170.500px;top:497px;width:103px;height:23px;background:#fff"></div>
<div class="t c" style="left:140px;top:505px;font-size:7.900px;color:#252423">Summary</div>
<div class="t c" style="left:221.800px;top:505px;font-size:7.900px;color:#252423">Duplicate of Summary</div>
<div class="abs" style="left:273.500px;top:497px;width:25.500px;height:23px;background:#117865"></div>
<svg class="ico" style="left:281.500px;top:504px" width="9" height="9" viewBox="0 0 9 9"><path d="M4.500.500v8M.5 4.500h8" stroke="#fff" stroke-width="1.700"/></svg>
<!-- ================= STATUS BAR ================= -->
<div class="abs" style="left:0;top:520px;width:1000px;height:16px;background:#f3f2f1;border-top:1px solid #e1dfdd"></div>
<div class="t" style="left:2.500px;top:525.500px;font-size:7.600px;color:#252423">Page 1 of 2</div>
<div class="t" style="left:737px;top:524.500px;font-size:8px;color:#252423">-</div>
<div class="abs" style="left:743.500px;top:528px;width:64.500px;height:1px;background:#605e5c"></div>
<div class="abs" style="left:769.500px;top:525px;width:1.800px;height:7px;background:#252423"></div>
<div class="abs" style="left:775px;top:526.500px;width:1px;height:4px;background:#605e5c"></div>
<div class="t" style="left:811.500px;top:524px;font-size:9px;color:#252423">+</div>
<div class="t" style="left:825.500px;top:524.400px;font-size:7.300px;color:#605e5c">84%</div>
<svg class="ico" style="left:853px;top:524px" width="11" height="9" viewBox="0 0 11 9"><rect x=".7" y=".7" width="9.600" height="7.600" rx=".8" fill="none" stroke="#3b3a39" stroke-width="1"/><path d="M2.500 3.500v-1.300h1.300M7.200 2.200h1.300v1.300M8.500 5.500v1.300H7.200M3.800 6.800H2.500V5.500" fill="none" stroke="#3b3a39" stroke-width=".8"/></svg>
<div class="t" style="left:872.500px;top:524.400px;font-size:7.750px;color:#252423">Update available (click to download)</div>
<!-- ================= TASKBAR ================= -->
<div class="abs" style="left:0;top:536px;width:1000px;height:26px;background:linear-gradient(90deg,#1e2c34 0%,#22323a 25%,#2a3a43 48%,#25353e 60%,#2c3c45 72%,#22323a 88%,#1e2c34 100%)"></div>
<div class="abs" style="left:195.500px;top:536px;width:31px;height:26px;background:#44525a"></div>
<svg class="ico" style="left:0;top:536px" width="1000" height="26" viewBox="0 0 1000 26">
 <g fill="#fff"><path d="M10 8.600l4.800-.7v4.800H10zM15.500 7.800l5.800-.9v5.800h-5.800zM10 13.400h4.800v4.800l-4.800-.7zM15.500 13.400h5.800v5.800l-5.800-.9z"/></g>
 <!-- firefox -->
 <g transform="translate(48.8 13.5) scale(1.2) translate(-48.8 -13.5)">
 <circle cx="48.800" cy="13.500" r="6.300" fill="#ff9500"/><circle cx="49.300" cy="13.800" r="3.600" fill="#7b3ff2"/><path d="M42.800 11c1-3 3.500-4.500 6.500-4.300-2 .8-3 2.200-2.800 3.800 1 .2 2 1 2 2-1.500-.3-2.700.5-2.500 2 .3 1.500 2 2.200 3.500 1.800 2-.5 3-2.200 2.800-4.200 1.500 2 1.300 5-.7 6.700-2.300 2-6 1.700-8-.8-1.500-1.900-1.700-4.700-.8-7z" fill="#ff4f1a"/></g>
 <!-- copilot -->
 <g transform="translate(81 13.8) scale(1.2) translate(-81 -13.8)">
 <path d="M78 7.500h5.500c1.500 0 2.200.8 2.600 2.200l1.400 5c.4 1.500-.4 2.600-1.900 2.600H83l-1.700-6.400c-.4-1.800-1.200-3.400-3.300-3.400z" fill="#7a5af5"/><path d="M84 20h-5.500c-1.500 0-2.200-.8-2.600-2.200l-1.400-5c-.4-1.500.4-2.600 1.900-2.600H79l1.700 6.400c.4 1.800 1.200 3.400 3.300 3.400z" fill="#f2a33a"/><path d="M78 7.500c2.100 0 2.900 1.600 3.300 3.400L82 13.500h-3.500L77 8.200z" fill="#2db4f0"/><path d="M84 20c-2.100 0-2.900-1.600-3.300-3.400L80 14h3.500l1.500 5.300z" fill="#e64a9a"/></g>
 <!-- explorer -->
 <g transform="translate(113.2 13.8) scale(1.1) translate(-113.2 -13.8)">
 <path d="M106.500 8h5l1.200 1.500h7.300v10h-13.500z" fill="#f7c948"/><rect x="106.500" y="11" width="13.500" height="8.500" fill="#fbd968"/><rect x="109.500" y="14.500" width="7.500" height="5" fill="#3a8fe0"/><rect x="111" y="16.500" width="4.500" height="3" fill="#fbd968"/></g>
 <!-- snowflake app -->
 <g transform="translate(145.2 13.3) scale(1.12) translate(-145.2 -13.3)">
 <rect x="138.500" y="6.500" width="13.500" height="13.500" fill="#f3f8fd" stroke="#cfe0f0" stroke-width=".5"/><g stroke="#2d7cc7" stroke-width="1" fill="none"><path d="M145.200 8.500v9.500M141.200 10.900l8 4.700M149.200 10.900l-8 4.700"/><path d="M143.800 9.500l1.400 1.200 1.400-1.200M143.800 17l1.400-1.200 1.400 1.200" stroke-width=".7"/></g></g>
 <!-- chrome -->
 <g transform="translate(178.5 13.5) scale(1.12) translate(-178.5 -13.5)">
 <circle cx="178.200" cy="13.300" r="6.800" fill="#fff"/><path d="M178.200 6.500a6.800 6.800 0 0 1 5.900 3.400h-5.900a3.400 3.400 0 0 0-3.200 2.300l-2.700-4.200a6.800 6.800 0 0 1 5.900-1.500z" fill="#ea4335"/><path d="M172.300 8a6.800 6.800 0 0 0 4.700 12l2.700-4.200a3.400 3.400 0 0 1-4.500-1.500z" fill="#34a853"/><path d="M184.100 9.900a6.800 6.800 0 0 1-7.100 10.100l3-4.800a3.400 3.400 0 0 0 1.300-5.300z" fill="#fbbc05"/><circle cx="178.200" cy="13.300" r="2.700" fill="#4285f4" stroke="#fff" stroke-width=".7"/><circle cx="182.500" cy="17.800" r="3" fill="#5f6a78"/><circle cx="182.500" cy="17" r="1" fill="#dfe3e8"/><path d="M180.800 19.500c.2-1 .8-1.400 1.700-1.400s1.500.4 1.700 1.400z" fill="#dfe3e8"/></g>
 <!-- power bi -->
 <rect x="213" y="6" width="4.500" height="15" rx=".8" fill="#f2c811"/><rect x="208.500" y="10" width="4.500" height="11" rx=".8" fill="#e8b10a"/><rect x="204" y="14" width="4.500" height="7" rx=".8" fill="#d99c08"/>
 <!-- powerpoint -->
 <g transform="translate(243 13.3) scale(1.18) translate(-243 -13.3)">
 <circle cx="243.500" cy="13.300" r="6.800" fill="#d35230"/><path d="M243.500 6.500a6.800 6.800 0 0 1 6.800 6.800h-6.800z" fill="#ff8f6b"/><rect x="236" y="9.500" width="7.500" height="7.500" rx=".8" fill="#c43e1c"/><text x="239.800" y="15.600" font-size="6.500" font-weight="bold" fill="#fff" text-anchor="middle" font-family="Liberation Sans, sans-serif">P</text></g>
 <!-- running indicators -->
 <g fill="#8ecbf5"><rect x="35.500" y="24.500" width="27" height="1.500"/><rect x="100" y="24.500" width="27" height="1.500"/><rect x="132.500" y="24.500" width="27" height="1.500"/><rect x="165" y="24.500" width="27" height="1.500"/><rect x="195.500" y="24.500" width="31" height="1.500"/><rect x="230" y="24.500" width="27" height="1.500"/></g>
 <!-- tray -->
 <g fill="none" stroke="#fff" stroke-width="1"><path d="M840 15.500l3.500-3.500 3.500 3.500"/><rect x="855.500" y="9.500" width="9.500" height="5.500" rx=".7"/><rect x="856.600" y="10.600" width="7.300" height="3.300" fill="#fff" stroke="none"/><path d="M865.600 11.300v2"/><path d="M853 9l1.500 1.500M852.500 11.500l2-1" stroke-width=".7"/><path d="M871.500 9.500a8.500 8.500 0 0 1 8.500 8.500M871.500 12.300a5.700 5.700 0 0 1 5.700 5.700M871.500 15.100a2.900 2.900 0 0 1 2.900 2.900" stroke-width=".9"/><circle cx="872" cy="17.600" r=".8" fill="#fff" stroke="none"/><path d="M885.500 11.500h1.800l2.200-2v7l-2.200-2h-1.800z" stroke-width=".8"/><path d="M891.200 10.800a3.500 3.500 0 0 1 0 4.500M892.800 9.500a5.500 5.500 0 0 1 0 7" stroke-width=".7"/><path d="M972.500 8h11v8h-3.800l-1.700 2v-2h-5.500z"/></g>
</svg>
<div class="t" style="left:903px;top:545.500px;font-size:7px;color:#fff">ENG</div>
<div class="t c" style="left:943.500px;top:539.500px;font-size:7.700px;color:#fff">1:15 AM</div>
<div class="t c" style="left:943.800px;top:550.700px;font-size:7.700px;color:#fff">9/22/2025</div>
<div class="abs" style="left:997.500px;top:536px;width:1px;height:26px;background:#55626a"></div>
</body>
</html>
